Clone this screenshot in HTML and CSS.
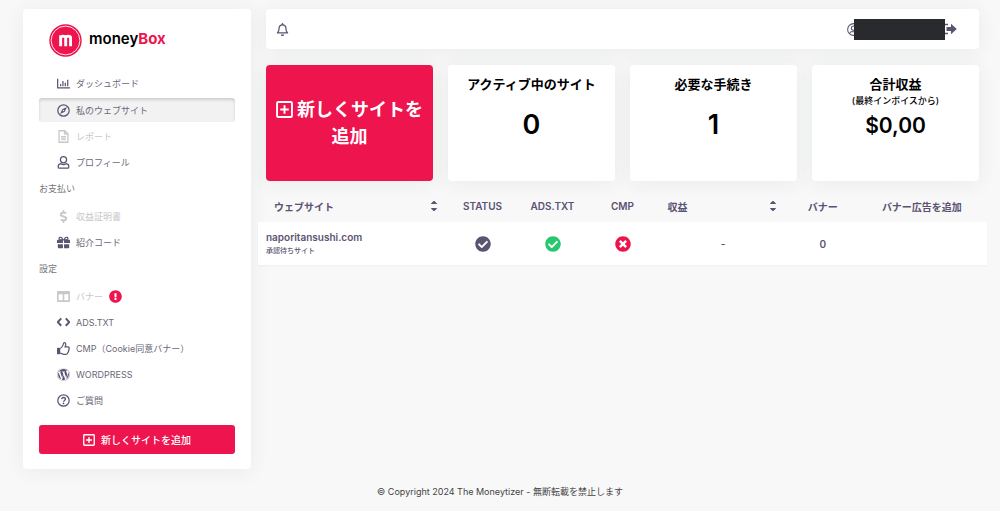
FILE: index.html
```html
<!DOCTYPE html>
<html lang="ja">
<head>
<meta charset="utf-8">
<title>moneyBox</title>
<link rel="stylesheet" href="styles.css">
</head>
<body>
<svg class="defs" aria-hidden="true">
  <symbol id="plus" viewBox="0 0 16 16"><rect x="1" y="1" width="14" height="14" rx="1" fill="none" stroke="currentColor" stroke-width="1.8"/><path d="M8 4v8M4 8h8" stroke="currentColor" stroke-width="1.8"/></symbol>
  <symbol id="sort" viewBox="0 0 320 512"><path fill="currentColor" d="M65 336h190c21 0 28 20 15 33l-93 83c-9 9-25 9-34 0l-93-83c-13-13-6-33 15-33zm205-193L177 60c-9-9-25-9-34 0l-93 83c-13 13-6 33 15 33h190c21 0 28-20 15-33z"/></symbol>
  <symbol id="check" viewBox="0 0 512 512"><path fill="currentColor" d="M504 256c0 136.967-111.033 248-248 248S8 392.967 8 256 119.033 8 256 8s248 111.033 248 248zM227.314 387.314l184-184c6.248-6.248 6.248-16.379 0-22.627l-22.627-22.627c-6.248-6.249-16.379-6.249-22.628 0L216 308.118l-70.059-70.059c-6.248-6.248-16.379-6.248-22.628 0l-22.627 22.627c-6.248 6.248-6.248 16.379 0 22.627l104 104c6.249 6.249 16.379 6.249 22.628.001z"/></symbol>
</svg>
<div class="layout">
  <aside class="sidebar">
    <a class="brand" href="#">
      <svg class="logo" viewBox="0 0 34 34" aria-hidden="true"><circle cx="17" cy="17" r="16.700" fill="#ee144e"/><circle cx="17" cy="17" r="14.800" fill="none" stroke="#fff" stroke-width=".9"/><path d="M12 23V11.500M12 14q0-1.400 2.600-1.400t2.600 1.600V23M17.200 14.200q0-1.600 2.500-1.600t2.500 1.600V23" fill="none" stroke="#fff" stroke-width="3"/></svg>
      <span class="brand-name">money<b>Box</b></span>
    </a>
    <nav class="nav">
      <a class="item" href="#"><svg class="icon" viewBox="0 0 16 16"><path d="M.8 2v11.500H16" fill="none" stroke="currentColor" stroke-width="1.5"/><path d="M4.500 8.500v3M7.300 5v6.500M10.200 7v4.500M13.200 3.500v8" stroke="currentColor" stroke-width="1.500"/></svg>ダッシュボード</a>
      <a class="item active" href="#"><svg class="icon" viewBox="0 0 16 16"><circle cx="8" cy="8" r="7" fill="none" stroke="currentColor" stroke-width="1.5"/><path fill="currentColor" fill-rule="evenodd" d="M12.200 3.800L9.600 9.500 3.800 12.200 6.500 6.400zM8 7a1 1 0 1 0 0 2 1 1 0 0 0 0-2z"/></svg>私のウェブサイト</a>
      <a class="item muted" href="#"><svg class="icon" viewBox="0 0 16 16"><path d="M2.500.9h7L13.500 4.700V15.100h-11zM9.200 1v4h4" fill="none" stroke="currentColor" stroke-width="1.600" stroke-linejoin="round"/><path d="M5 8h6M5 10h6M5 12h6" stroke="currentColor" stroke-width="1.300"/></svg>レポート</a>
      <a class="item" href="#"><svg class="icon" viewBox="0 0 16 16"><g fill="none" stroke="currentColor" stroke-width="1.5"><circle cx="8" cy="4.700" r="3.800"/><path d="M4.700 9.500C2.700 9.800 1.500 11 1.500 13v.700q0 1.300 1.300 1.300h10.400q1.300 0 1.300-1.300V13c0-2-1.200-3.200-3.200-3.500-2 1.300-4.600 1.300-6.600 0z"/></g></svg>プロフィール</a>
      <h2 class="section">お支払い</h2>
      <a class="item muted" href="#"><svg class="icon" viewBox="0 0 288 512"><path fill="currentColor" d="M209.200 233.400l-108-31.600C88.700 198.200 80 186.500 80 173.500c0-16.300 13.200-29.500 29.500-29.500h66.300c12.200 0 24.200 3.700 34.200 10.500 6.100 4.100 14.300 3.100 19.500-2l34.800-34c7.100-6.900 6.100-18.400-1.800-24.500C238 74.800 207.400 64.100 176 64V16c0-8.800-7.200-16-16-16h-32c-8.800 0-16 7.200-16 16v48h-2.500C45.800 64-5.400 118.700.5 183.600c4.200 46.100 39.400 83.600 83.800 96.600l102.500 30c12.500 3.700 21.200 15.300 21.200 28.300 0 16.300-13.200 29.500-29.500 29.500h-66.300C100 368 88 364.300 78 357.500c-6.100-4.100-14.300-3.100-19.500 2l-34.800 34c-7.100 6.900-6.100 18.400 1.800 24.500 24.500 19.200 55.100 29.900 86.500 30v48c0 8.800 7.200 16 16 16h32c8.800 0 16-7.200 16-16v-48.200c46.600-.9 90.300-28.600 105.700-72.700 21.500-61.600-14.600-124.800-72.500-141.700z"/></svg>収益証明書</a>
      <a class="item" href="#"><svg class="icon" viewBox="0 0 16 16"><path d="M7.300 4.700H4A1.600 1.600 0 1 1 4.300 1.500C5.700 1.500 6.500 2.800 7.300 4.700zM8.700 4.700H12A1.600 1.600 0 1 0 11.700 1.500C10.300 1.500 9.500 2.800 8.700 4.700z" fill="none" stroke="currentColor" stroke-width="1.500"/><path fill="currentColor" d="M1 4.700h6.300v4H0v-3q0-1 1-1zM8.700 4.700H15q1 0 1 1v3H8.700zM1 10h6.300v5H2q-1 0-1-1zM8.700 10H15v4q0 1-1 1H8.700z"/></svg>紹介コード</a>
      <h2 class="section">設定</h2>
      <a class="item muted" href="#"><svg class="icon" viewBox="0 0 16 16"><path fill="currentColor" fill-rule="evenodd" d="M1.300 1.300h13.400q1.300 0 1.300 1.300v10.800q0 1.300-1.300 1.300H1.300Q0 14.700 0 13.400V2.600q0-1.300 1.300-1.300zM2 5.300v7.400h5V5.300zM9 5.300v7.400h5V5.300z"/></svg>バナー<svg class="alert" viewBox="0 0 512 512" role="img" aria-label="注意"><path fill="currentColor" d="M504 256c0 136.997-111.043 248-248 248S8 392.997 8 256C8 119.083 119.043 8 256 8s248 111.083 248 248zm-248 50c-25.405 0-46 20.595-46 46s20.595 46 46 46 46-20.595 46-46-20.595-46-46-46zm-43.673-165.346l7.418 136c.347 6.364 5.609 11.346 11.982 11.346h48.546c6.373 0 11.635-4.982 11.982-11.346l7.418-136c.375-6.874-5.098-12.654-11.982-12.654h-63.383c-6.884 0-12.356 5.780-11.981 12.654z"/></svg></a>
      <a class="item" href="#"><svg class="icon" viewBox="0 0 16 16"><path d="M5.200 3L1 7.500 5.200 12M10.800 3L15 7.500 10.800 12" fill="none" stroke="currentColor" stroke-width="2.400"/></svg>ADS.TXT</a>
      <a class="item" href="#"><svg class="icon" viewBox="0 0 16 16"><path fill="currentColor" d="M0 7.200h4V15H0z"/><path d="M4 8c2.500-1.300 3-3 3.700-5C8 1.500 8.200.9 9 .9c2.200 0 2.200 2.400 1 5h3.300c1.800 0 2.300 1.700 1.200 2.800.5 1 .2 1.900-.5 2.400.3 1-.1 1.700-.8 2.100 0 1.400-.8 1.900-2.200 1.900H8.500C6.500 15.100 6 14 4 13.800" fill="none" stroke="currentColor" stroke-width="1.500"/></svg>CMP（Cookie同意バナー）</a>
      <a class="item" href="#"><svg class="icon" viewBox="0 0 512 512"><path fill="currentColor" d="M61.700 169.400l101.500 278C92.200 413 43.300 340.200 43.300 256c0-30.900 6.600-60.100 18.400-86.600zm337.900 75.900c0-26.300-9.400-44.500-17.500-58.700-10.800-17.500-20.900-32.400-20.900-49.900 0-19.600 14.800-37.800 35.700-37.800.9 0 1.800.1 2.800.2-37.900-34.700-88.300-55.900-143.700-55.900-74.300 0-139.700 38.100-177.800 95.900 5 .2 9.700.3 13.700.3 22.200 0 56.700-2.700 56.700-2.700 11.500-.7 12.800 16.200 1.400 17.500 0 0-11.500 1.300-24.300 2l77.500 230.400L249.800 247l-33.100-90.800c-11.500-.7-22.300-2-22.300-2-11.500-.7-10.100-18.200 1.300-17.500 0 0 35.100 2.700 56 2.700 22.200 0 56.700-2.700 56.700-2.700 11.500-.7 12.800 16.200 1.400 17.500 0 0-11.500 1.300-24.300 2l76.900 228.700 21.200-70.900c9-29.400 16-50.500 16-68.700zm-139.900 29.300l-63.800 185.500c19.100 5.600 39.200 8.700 60.100 8.700 24.800 0 48.500-4.300 70.600-12.100-.6-.9-1.100-1.900-1.500-2.900l-65.400-179.200zm183-120.700c.9 6.800 1.400 14 1.400 21.900 0 21.600-4 45.800-16.200 76.200l-65 187.900C426.200 403 468.700 334.500 468.700 256c0-37-9.400-71.800-26-102.100zM504 256c0 136.800-111.300 248-248 248C119.200 504 8 392.700 8 256 8 119.200 119.200 8 256 8c136.700 0 248 111.200 248 248zm-11.400 0c0-130.500-106.200-236.600-236.600-236.600C125.500 19.400 19.400 125.500 19.400 256S125.600 492.600 256 492.600c130.500 0 236.600-106.100 236.600-236.600z"/></svg>WORDPRESS</a>
      <a class="item" href="#"><svg class="icon" viewBox="0 0 16 16"><circle cx="8" cy="8" r="7" fill="none" stroke="currentColor" stroke-width="1.500"/><path d="M5.700 6.300C6 4.900 6.900 4.300 8 4.300c1.300 0 2.400.8 2.400 2C10.400 7.900 8 7.900 8 9.500" fill="none" stroke="currentColor" stroke-width="1.600"/><circle cx="8" cy="11.600" r="1.100" fill="currentColor"/></svg>ご質問</a>
    </nav>
    <button class="add" type="button"><svg class="add-icon"><use href="#plus"/></svg>新しくサイトを追加</button>
  </aside>
  <main class="main">
    <header class="topbar">
      <button class="icon-button" type="button" aria-label="通知"><svg class="bell" viewBox="0 0 448 512"><path fill="currentColor" d="M439.390 362.290c-19.320-20.760-55.470-51.990-55.470-154.290 0-77.700-54.480-139.900-127.940-155.160V32c0-17.670-14.320-32-31.980-32s-31.980 14.330-31.980 32v20.840C118.560 68.100 64.080 130.300 64.080 208c0 102.300-36.150 133.530-55.470 154.290-6 6.450-8.660 14.160-8.610 21.710.11 16.400 12.980 32 32.100 32h383.800c19.120 0 32-15.600 32.100-32 .05-7.550-2.610-15.270-8.610-21.710zM67.530 368c21.220-27.970 44.420-74.330 44.530-159.420 0-.2-.06-.38-.06-.58 0-61.860 50.140-112 112-112s112 50.140 112 112c0 .2-.06.38-.06.58.11 85.100 23.310 131.460 44.530 159.420H67.530zM224 512c35.320 0 63.970-28.650 63.970-64H160.030c0 35.350 28.650 64 63.970 64z"/></svg></button>
      <div class="account">
        <svg class="user" viewBox="0 0 16 16" aria-hidden="true"><g fill="none" stroke="currentColor" stroke-width="1.300"><circle cx="8" cy="8" r="7.200"/><circle cx="8" cy="6.300" r="2.700"/><path d="M3.200 13.200c.4-2 1.500-2.800 3-2.800q1.800.7 3.600 0c1.500 0 2.600.8 3 2.800"/></g></svg>
        <span class="name-cover"></span>
        <button class="icon-button" type="button" aria-label="ログアウト"><svg class="logout" viewBox="0 0 12 12"><path d="M0 1.500h3M0 10.500h3" stroke="currentColor" stroke-width="1.500"/><path fill="currentColor" d="M1.500 4h4.500V.8L11.800 6 6 11.200V8H1.500z"/></svg></button>
      </div>
    </header>
    <section class="cards">
      <button class="card new-site" type="button"><span><svg class="new-icon"><use href="#plus"/></svg> 新しくサイトを追加</span></button>
      <article class="card"><h3>アクティブ中のサイト</h3><p class="figure spaced">0</p></article>
      <article class="card"><h3>必要な手続き</h3><p class="figure spaced">1</p></article>
      <article class="card"><h3>合計収益</h3><p class="note">(最終インボイスから)</p><p class="figure amount">$0,00</p></article>
    </section>
    <table class="sites">
      <colgroup><col class="c-site"><col class="c-status"><col class="c-status"><col class="c-status"><col class="c-income"><col class="c-banner"><col class="c-add"></colgroup>
      <thead><tr>
        <th scope="col"><span class="sortable first">ウェブサイト<svg class="sort"><use href="#sort"/></svg></span></th>
        <th scope="col">STATUS</th><th scope="col">ADS.TXT</th><th scope="col">CMP</th>
        <th scope="col"><span class="sortable">収益<svg class="sort"><use href="#sort"/></svg></span></th>
        <th scope="col">バナー</th><th scope="col">バナー広告を追加</th>
      </tr></thead>
      <tbody><tr>
        <td class="site"><strong>naporitansushi.com</strong><small>承認待ちサイト</small></td>
        <td><svg class="state"><use href="#check"/></svg></td>
        <td><svg class="state ok"><use href="#check"/></svg></td>
        <td><svg class="state bad" viewBox="0 0 512 512"><path fill="currentColor" d="M256 8C119 8 8 119 8 256s111 248 248 248 248-111 248-248S393 8 256 8zm121.600 313.100c4.700 4.700 4.700 12.300 0 17L338 377.600c-4.700 4.700-12.300 4.700-17 0L256 312l-65.100 65.600c-4.700 4.700-12.300 4.700-17 0L134.400 338c-4.700-4.700-4.700-12.300 0-17l65.600-65-65.600-65.100c-4.700-4.700-4.700-12.300 0-17l39.600-39.600c4.700-4.700 12.300-4.700 17 0l65 65.700 65.100-65.600c4.700-4.700 12.300-4.700 17 0l39.600 39.600c4.700 4.700 4.700 12.300 0 17L312 256l65.600 65.100z"/></svg></td>
        <td>-</td><td>0</td><td></td>
      </tr></tbody>
    </table>
  </main>
</div>
<footer class="footer">© Copyright 2024 The Moneytizer - 無断転載を禁止します</footer>
</body>
</html>
```

FILE: styles.css
```css
* { box-sizing: border-box; }
body {
  margin: 0;
  background: #f8f8f8;
  color: #5a5371;
  font-family: Inter, "Noto Sans CJK JP", sans-serif;
  font-size: 9px;
}
h2, h3, p { margin: 0; }
a { color: inherit; text-decoration: none; }
button { border: 0; font: inherit; cursor: pointer; }
svg { flex: none; }
.defs { position: absolute; width: 0; height: 0; }

.layout {
  display: grid;
  grid-template-columns: 228px minmax(0, 1fr);
  gap: 15px;
  padding: 9px 21px 0 23px;
}
.sidebar, .topbar, .card {
  background: #fff;
  border-radius: 4px;
  box-shadow: 0 2px 20px rgba(40, 50, 50, 0.07);
}
.sidebar { padding: 15px 16px; }
.brand { display: flex; align-items: center; gap: 7px; padding-left: 10px; }
.logo { width: 33px; height: 33px; }
.brand-name { padding-bottom: 4px; color: #000; font-size: 15px; font-weight: 600; }
.brand-name b { color: #ee144e; font-weight: 700; }

.nav { margin-top: 13px; }
.item {
  display: flex;
  align-items: center;
  gap: 6px;
  height: 26px;
  padding-left: 18px;
  color: #6c6779;
}
.icon { width: 13px; height: 13px; color: #5a5371; }
.active {
  height: 24px;
  margin: 2px 0 1px;
  border-radius: 3px;
  background: #f2f2f2;
  box-shadow: inset 0 2px 3px rgba(0, 0, 0, 0.15);
}
.muted, .muted .icon { color: #c8c8c8; }
.alert { width: 13px; height: 13px; color: #ee144e; }
.section { color: #777; font-size: 9px; font-weight: 400; line-height: 28px; }
.add {
  display: flex;
  align-items: center;
  justify-content: center;
  gap: 6px;
  width: 100%;
  height: 29px;
  margin-top: 12px;
  border-radius: 3px;
  background: #ee144e;
  color: #fff;
  font-size: 10px;
  font-weight: 500;
}
.add-icon { width: 12px; height: 12px; }

.topbar {
  display: flex;
  align-items: center;
  justify-content: space-between;
  height: 40px;
  padding: 0 22px 0 10px;
}
.icon-button { display: flex; padding: 0; background: none; color: #5a5371; }
.bell { width: 13px; height: 13px; }
.account { display: flex; align-items: center; }
.user { width: 13px; height: 13px; }
.name-cover {
  z-index: 1;
  width: 91px;
  height: 21px;
  margin-left: -6px;
  background: #292a2e;
}
.logout { width: 12px; height: 12px; }

.cards {
  display: grid;
  grid-template-columns: repeat(4, minmax(0, 1fr));
  gap: 15px;
  margin-top: 16px;
}
.card { min-height: 116px; padding: 10px 6px; color: #000; text-align: center; }
.card h3 { font-size: 13px; font-weight: 600; line-height: 18px; }
.note { font-size: 9px; font-weight: 500; line-height: 16px; }
.figure { font-weight: 600; line-height: 34px; }
.spaced { margin-top: 15px; font-size: 27px; }
.amount { font-size: 21px; }
.new-site {
  background: #ee144e;
  color: #fff;
  font-size: 18px;
  font-weight: 700;
  line-height: 27px;
}
.new-icon { width: 17px; height: 17px; vertical-align: -2px; }

.sites {
  width: calc(100% + 16px);
  margin: 9px -8px 0;
  border-collapse: collapse;
  table-layout: fixed;
  font-size: 10px;
  font-weight: 600;
  text-align: center;
}
.c-site { width: 26%; }
.c-status { width: 70px; }
.c-income { width: 18%; }
.c-banner { width: 68px; }
.sites th { height: 32px; padding: 0; font-weight: 600; }
.sites td { height: 43px; padding: 0; }
.sites tbody tr { background: #fff; box-shadow: 0 1px 2px rgba(0, 0, 0, 0.04); }
.sortable { display: flex; align-items: center; justify-content: space-between; padding: 0 12px 0 10px; }
.first { padding: 0 10px 0 16px; }
.sort { width: 8px; height: 14px; }
.sites .site { padding-left: 8px; text-align: left; }
.site strong, .site small { display: block; }
.site strong { font-weight: 600; line-height: 15px; }
.site small { font-size: 7px; font-weight: 500; line-height: 12px; }
.state { display: inline-block; width: 16px; height: 16px; vertical-align: middle; }
.ok { color: #27c76f; }
.bad { color: #ee144e; }
.footer { padding: 15px; color: #444; line-height: 15px; text-align: center; }
```
